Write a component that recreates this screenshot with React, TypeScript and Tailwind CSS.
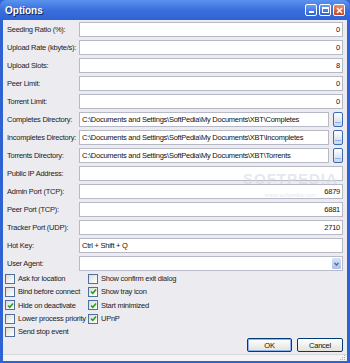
import React from 'react';

const font = { fontFamily: '"Liberation Sans", Arial, sans-serif' };

const rows: { label: string; value: string; kind: 'num' | 'dir' | 'text' | 'combo' }[] = [
  { label: 'Seeding Ratio (%):', value: '0', kind: 'num' },
  { label: 'Upload Rate (kbyte/s):', value: '0', kind: 'num' },
  { label: 'Upload Slots:', value: '8', kind: 'num' },
  { label: 'Peer Limit:', value: '0', kind: 'num' },
  { label: 'Torrent Limit:', value: '0', kind: 'num' },
  { label: 'Completes Directory:', value: 'C:\\Documents and Settings\\SoftPedia\\My Documents\\XBT\\Completes', kind: 'dir' },
  { label: 'Incompletes Directory:', value: 'C:\\Documents and Settings\\SoftPedia\\My Documents\\XBT\\Incompletes', kind: 'dir' },
  { label: 'Torrents Directory:', value: 'C:\\Documents and Settings\\SoftPedia\\My Documents\\XBT\\Torrents', kind: 'dir' },
  { label: 'Public IP Address:', value: '', kind: 'text' },
  { label: 'Admin Port (TCP):', value: '6879', kind: 'num' },
  { label: 'Peer Port (TCP):', value: '6881', kind: 'num' },
  { label: 'Tracker Port (UDP):', value: '2710', kind: 'num' },
  { label: 'Hot Key:', value: 'Ctrl + Shift + Q', kind: 'text' },
  { label: 'User Agent:', value: '', kind: 'combo' },
];

const checks: [string, boolean, string, boolean][] = [
  ['Ask for location', false, 'Show confirm exit dialog', false],
  ['Bind before connect', false, 'Show tray icon', true],
  ['Hide on deactivate', true, 'Start minimized', true],
  ['Lower process priority', false, 'UPnP', true],
  ['Send stop event', false, '', false],
];

const txt = 'text-[7.5px] tracking-[-0.25px] whitespace-nowrap';

function Box({ checked }: { checked: boolean }) {
  return (
    <span className="flex h-[10px] w-[10px] shrink-0 items-center justify-center border border-[#4f6f9f] bg-gradient-to-br from-[#dcdcd6] to-white">
      {checked && (
        <svg width="7" height="7" viewBox="0 0 7 7">
          <path d="M1 3.5 L2.8 5.3 L6 1.5" stroke="#21a121" strokeWidth="1.6" fill="none" />
        </svg>
      )}
    </span>
  );
}

function Check({ label, checked }: { label: string; checked: boolean }) {
  if (!label) return <div />;
  return (
    <div className={`flex h-[13.3px] items-center gap-[3px] text-[#222] ${txt}`}>
      <Box checked={checked} />
      <span>{label}</span>
    </div>
  );
}

function Field({ value, kind }: { value: string; kind: string }) {
  const base = `flex h-[15px] items-center border border-[#b7bac6] bg-white px-[2px] text-[#111] ${txt}`;
  if (kind === 'dir') {
    return (
      <div className="flex min-w-0 gap-[4px]">
        <div className={`${base} min-w-0 flex-1 overflow-hidden`}>{value}</div>
        <div className="flex h-[15px] w-[10px] shrink-0 items-end justify-center rounded-[2px] border border-[#3c6ab7] bg-gradient-to-b from-white to-[#c9d6ee] pb-[2px] text-[7px] leading-none text-[#223]">
          ...
        </div>
      </div>
    );
  }
  if (kind === 'combo') {
    return (
      <div className={`${base} justify-end pr-0`}>
        <div className="mr-[1px] flex h-[11px] w-[9px] items-center justify-center rounded-[1px] bg-gradient-to-b from-[#d7e3f8] to-[#a9c1ec]">
          <svg width="5" height="4" viewBox="0 0 5 4">
            <path d="M0.5 0.8 L2.5 3 L4.5 0.8" stroke="#4d6185" strokeWidth="1.2" fill="none" />
          </svg>
        </div>
      </div>
    );
  }
  return <div className={`${base} ${kind === 'num' ? 'justify-end' : ''}`}>{value}</div>;
}

export default function App() {
  return (
    <div className="relative flex h-[363px] w-[350px] flex-col overflow-hidden bg-[#2f63d3]" style={font}>
      <div className="flex h-[20px] shrink-0 items-center justify-between rounded-t-[6px] bg-gradient-to-b from-[#5b93ef] via-[#3a6fdc] to-[#2f63d3] pl-[5px] pr-[5px]">
        <span className="text-[10px] font-bold text-white [text-shadow:1px_1px_0_#0a246a]">Options</span>
        <div className="flex gap-[2px]">
          <div className="flex h-[12px] w-[12px] items-end justify-center rounded-[2px] border border-white bg-gradient-to-b from-[#6c9cf4] to-[#2c60d8] pb-[2px]">
            <span className="h-[2px] w-[5px] bg-white" />
          </div>
          <div className="flex h-[12px] w-[12px] items-center justify-center rounded-[2px] border border-white bg-gradient-to-b from-[#6c9cf4] to-[#2c60d8]">
            <span className="h-[6px] w-[7px] border border-t-2 border-white" />
          </div>
          <div className="flex h-[12px] w-[12px] items-center justify-center rounded-[2px] border border-white bg-gradient-to-b from-[#e88e6e] to-[#c7421f]">
            <svg width="7" height="7" viewBox="0 0 7 7">
              <path d="M1 1 L6 6 M6 1 L1 6" stroke="white" strokeWidth="1.5" />
            </svg>
          </div>
        </div>
      </div>

      <div className="mx-[3px] flex flex-1 flex-col bg-[#ecebf0]">
        <div className="flex flex-col gap-[3px] pl-[4px] pr-[4px] pt-[2px]">
          {rows.map((r) => (
            <div key={r.label} className="grid grid-cols-[72px_minmax(0,1fr)] items-center">
              <span className={`text-[#222] ${txt}`}>{r.label}</span>
              <Field value={r.value} kind={r.kind} />
            </div>
          ))}
        </div>

        <div className="grid grid-cols-[83px_1fr] pl-[2px] pt-[1px]">
          {checks.map(([a, ca, b, cb]) => (
            <React.Fragment key={a}>
              <Check label={a} checked={ca} />
              <Check label={b} checked={cb} />
            </React.Fragment>
          ))}
        </div>

        <div className="flex flex-1 items-end justify-end gap-[5px] pb-[2px] pr-[4px]">
          <button className={`flex h-[14px] w-[45px] items-center justify-center rounded-[2px] border border-[#003c74] bg-gradient-to-b from-white to-[#e3e3db] text-[#111] shadow-[inset_0_0_0_1px_#8fb4ee] ${txt}`}>
            OK
          </button>
          <button className={`flex h-[14px] w-[46px] items-center justify-center rounded-[2px] border border-[#003c74] bg-gradient-to-b from-white to-[#e3e3db] text-[#111] ${txt}`}>
            Cancel
          </button>
        </div>
        <div className="flex h-[7px] justify-end border-t border-[#d8d7dc] bg-[#f3f2f5] pr-[1px]">
          <svg width="6" height="6" viewBox="0 0 6 6">
            <rect x="4" y="0" width="1" height="1" fill="#b0b0b0" />
            <rect x="2" y="2" width="1" height="1" fill="#b0b0b0" />
            <rect x="4" y="2" width="1" height="1" fill="#b0b0b0" />
            <rect x="0" y="4" width="1" height="1" fill="#b0b0b0" />
            <rect x="2" y="4" width="1" height="1" fill="#b0b0b0" />
            <rect x="4" y="4" width="1" height="1" fill="#b0b0b0" />
          </svg>
        </div>
      </div>
      <div className="h-[4px] shrink-0" />

      <div className="pointer-events-none absolute left-[243px] top-[171px] flex flex-col items-center text-[#d8d8e0] opacity-60">
        <span className="text-[15px] font-bold leading-none tracking-[1px]">SOFTPEDIA</span>
        <span className="mt-[6px] text-[6px] leading-none">www.softpedia.com</span>
      </div>
    </div>
  );
}
